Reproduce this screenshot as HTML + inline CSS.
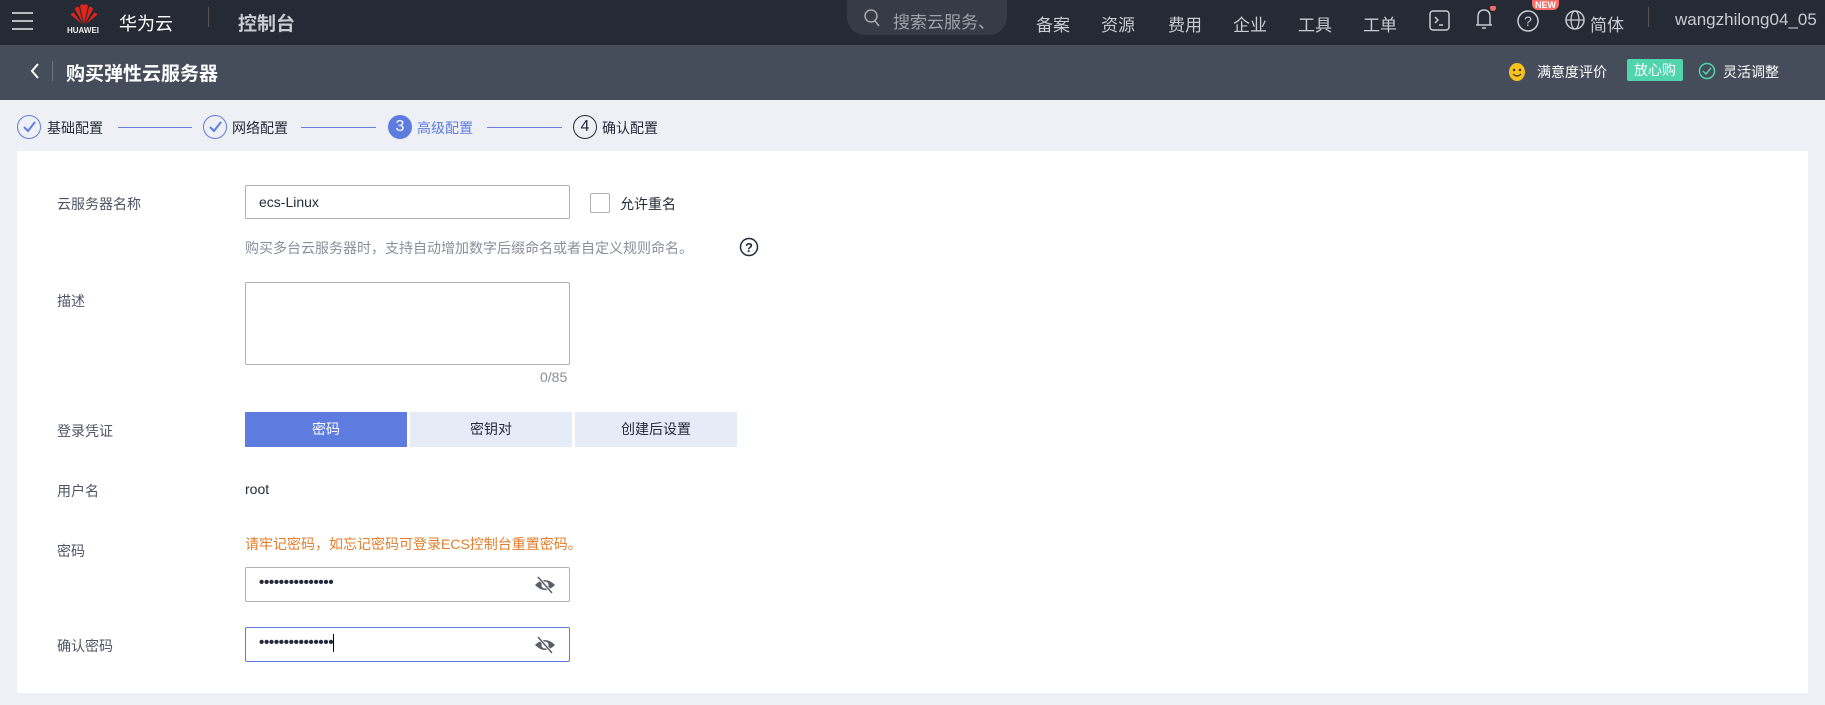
<!DOCTYPE html>
<html><head><meta charset="utf-8"><style>
*{box-sizing:border-box;margin:0;padding:0}
body{width:1825px;height:705px;overflow:hidden;background:#eff0f5;font-family:"Liberation Sans","Noto Sans CJK SC",sans-serif;font-size:14px;color:#252b3a;position:relative}
.a{position:absolute;white-space:nowrap}
.top{position:absolute;left:0;top:0;width:1825px;height:45px;background:#262a34}
.sub{position:absolute;left:0;top:45px;width:1825px;height:55px;background:#464d5a}
.nav{color:#c8cbd2;font-size:17px;top:11px}
.card{position:absolute;left:17px;top:151px;width:1791px;height:542px;background:#fff}
.lbl{color:#4e5463;font-size:14px}
.inp{position:absolute;border:1px solid #adb0b8;border-radius:2px;background:#fff;left:245px;width:325px}
.btn{position:absolute;top:412px;height:35px;line-height:35px;text-align:center;font-size:14px;background:#e6ebf8;color:#252b3a}
.circ{position:absolute;top:115px;width:24px;height:24px;border-radius:50%;border:1px solid #5e7ce0;text-align:center;line-height:22px;font-size:16px}
.line{position:absolute;top:127px;height:1px;background:#6b7fdd}
.st{top:118px;font-size:14px}
.pw{font-size:15px;font-weight:bold;letter-spacing:-0.3px;padding:6px 13px}
</style></head><body>
<div class="top"></div>
<div class="a" style="left:12px;top:12px;width:21px;height:2px;background:#bbb;box-shadow:0 8px 0 #bbb,0 16px 0 #bbb"></div>
<svg class="a" style="left:68px;top:2px" width="32" height="24" viewBox="0 0 32 24"><g fill="#e1251b"><path d="M16 22 L12 4 Q14 1 16 3Z"/><path d="M16 22 L20 4 Q18 1 16 3Z"/><path d="M15 22 L7 7 Q8 4 11 5Z"/><path d="M17 22 L25 7 Q24 4 21 5Z"/><path d="M14 22 L3 13 Q3 10 6 11Z"/><path d="M18 22 L29 13 Q29 10 26 11Z"/></g></svg>
<div class="a" style="left:67px;top:26px;color:#eee;font-size:8px;font-weight:bold">HUAWEI</div>
<div class="a" style="left:119px;top:10px;color:#fff;font-size:18px">华为云</div>
<div class="a" style="left:208px;top:7px;width:1px;height:20px;background:#555"></div>
<div class="a" style="left:238px;top:9px;color:#c8cbd2;font-size:19px;font-weight:bold">控制台</div>
<div class="a" style="left:847px;top:0;width:160px;height:35px;border-radius:0 0 18px 18px;background:#363b45"></div>
<svg class="a" style="left:863px;top:8px" width="18" height="20"><circle cx="8" cy="8" r="6" fill="none" stroke="#aaa" stroke-width="1.5"/><path d="M12 13 L16 18" stroke="#aaa" stroke-width="1.5"/></svg>
<div class="a nav" style="left:893px;top:8px;color:#9ea2aa">搜索云服务、</div>
<div class="a nav" style="left:1036px">备案</div>
<div class="a nav" style="left:1101px">资源</div>
<div class="a nav" style="left:1168px">费用</div>
<div class="a nav" style="left:1233px">企业</div>
<div class="a nav" style="left:1298px">工具</div>
<div class="a nav" style="left:1363px">工单</div>
<svg class="a" style="left:1428px;top:9px" width="24" height="24"><rect x="2" y="2" width="19" height="19" rx="3" fill="none" stroke="#c8cbd2" stroke-width="1.5"/><path d="M7 8 L10 11 L7 14 M11 16 H15" fill="none" stroke="#c8cbd2" stroke-width="1.5"/></svg>
<svg class="a" style="left:1472px;top:6px" width="24" height="26"><path d="M6 19 V11 Q6 4 12 4 Q18 4 18 11 V19 Z M4 19 H20 M10 22 H14" fill="none" stroke="#c8cbd2" stroke-width="1.5"/><circle cx="21" cy="2" r="3" fill="#f66f6a"/></svg>
<svg class="a" style="left:1516px;top:9px" width="24" height="24"><circle cx="12" cy="12" r="10" fill="none" stroke="#c8cbd2" stroke-width="1.5"/><text x="12" y="17" font-size="14" fill="#c8cbd2" text-anchor="middle" font-family="Liberation Sans">?</text></svg>
<div class="a" style="left:1532px;top:0;background:#f66f6a;color:#fff;font-size:9px;font-weight:bold;padding:0 3px;border-radius:0 0 6px 6px">NEW</div>
<svg class="a" style="left:1564px;top:9px" width="22" height="22"><circle cx="11" cy="11" r="9" fill="none" stroke="#c8cbd2" stroke-width="1.5"/><ellipse cx="11" cy="11" rx="4" ry="9" fill="none" stroke="#c8cbd2" stroke-width="1.3"/><path d="M2 11 H20" stroke="#c8cbd2" stroke-width="1.3"/></svg>
<div class="a nav" style="left:1590px">简体</div>
<div class="a" style="left:1648px;top:7px;width:1px;height:20px;background:#555"></div>
<div class="a nav" style="left:1675px;top:10px">wangzhilong04_05</div>

<div class="sub"></div>
<svg class="a" style="left:28px;top:61px" width="14" height="20"><path d="M10 3 L4 10 L10 17" fill="none" stroke="#fff" stroke-width="2"/></svg>
<div class="a" style="left:52px;top:61px;width:1px;height:20px;background:#6a707c"></div>
<div class="a" style="left:66px;top:59px;color:#fff;font-size:19px;font-weight:bold">购买弹性云服务器</div>
<svg class="a" style="left:1508px;top:62px" width="18" height="20"><ellipse cx="9" cy="10" rx="8" ry="9" fill="#f7c21c"/><circle cx="6" cy="8" r="1.2" fill="#333"/><circle cx="12" cy="8" r="1.2" fill="#333"/><path d="M5 12 Q9 16 13 12" fill="none" stroke="#333" stroke-width="1.2"/></svg>
<div class="a" style="left:1537px;top:62px;color:#fff;font-size:14px">满意度评价</div>
<div class="a" style="left:1627px;top:59px;width:56px;height:22px;background:#50d4ab;color:#fff;font-size:14px;text-align:center;line-height:22px;border-radius:2px">放心购</div>
<svg class="a" style="left:1698px;top:62px" width="18" height="18"><circle cx="9" cy="9" r="7.5" fill="none" stroke="#50d4ab" stroke-width="1.5"/><path d="M5 9 L8 12 L13 6" fill="none" stroke="#50d4ab" stroke-width="1.5"/></svg>
<div class="a" style="left:1723px;top:62px;color:#fff;font-size:14px">灵活调整</div>

<div class="circ" style="left:17px"><svg width="22" height="22"><path d="M6 11 L10 15 L17 6" fill="none" stroke="#5e7ce0" stroke-width="2"/></svg></div>
<div class="a st" style="left:47px">基础配置</div>
<div class="line" style="left:118px;width:74px"></div>
<div class="circ" style="left:203px"><svg width="22" height="22"><path d="M6 11 L10 15 L17 6" fill="none" stroke="#5e7ce0" stroke-width="2"/></svg></div>
<div class="a st" style="left:232px">网络配置</div>
<div class="line" style="left:301px;width:75px"></div>
<div class="circ" style="left:388px;background:#5e7ce0;color:#fff">3</div>
<div class="a st" style="left:417px;color:#5e7ce0">高级配置</div>
<div class="line" style="left:487px;width:75px"></div>
<div class="circ" style="left:573px;border-color:#252b3a">4</div>
<div class="a st" style="left:602px">确认配置</div>

<div class="card"></div>
<div class="a lbl" style="left:57px;top:194px">云服务器名称</div>
<div class="inp" style="top:185px;height:34px;padding:8px 13px;font-size:14px">ecs-Linux</div>
<div class="a" style="left:590px;top:193px;width:20px;height:20px;border:1px solid #adb0b8;border-radius:2px"></div>
<div class="a" style="left:620px;top:194px">允许重名</div>
<div class="a" style="left:245px;top:238px;color:#8a8e99;font-size:14px">购买多台云服务器时，支持自动增加数字后缀命名或者自定义规则命名。</div>
<svg class="a" style="left:739px;top:237px" width="20" height="20"><circle cx="10" cy="10" r="8.5" fill="none" stroke="#252b3a" stroke-width="1.5"/><text x="10" y="15" font-size="13" font-weight="bold" fill="#252b3a" text-anchor="middle" font-family="Liberation Sans">?</text></svg>
<div class="a lbl" style="left:57px;top:291px">描述</div>
<div class="inp" style="top:282px;height:83px"></div>
<div class="a" style="left:540px;top:369px;color:#8a8e99">0/85</div>
<div class="a lbl" style="left:57px;top:421px">登录凭证</div>
<div class="btn" style="left:245px;width:162px;background:#5e7ce0;color:#fff">密码</div>
<div class="btn" style="left:410px;width:162px">密钥对</div>
<div class="btn" style="left:575px;width:162px">创建后设置</div>
<div class="a lbl" style="left:57px;top:481px">用户名</div>
<div class="a" style="left:245px;top:481px">root</div>
<div class="a lbl" style="left:57px;top:541px">密码</div>
<div class="a" style="left:245px;top:534px;color:#e37d29">请牢记密码，如忘记密码可登录ECS控制台重置密码。</div>
<div class="inp pw" style="top:567px;height:35px">•••••••••••••••</div>
<div class="a lbl" style="left:57px;top:636px">确认密码</div>
<div class="inp pw" style="top:627px;height:35px;border-color:#5e7ce0">•••••••••••••••<span style="display:inline-block;width:1px;height:18px;background:#000;vertical-align:middle"></span></div>
<svg class="a" style="left:534px;top:575px" width="22" height="20"><path d="M1 10 Q11 0 21 10 Q11 20 1 10Z" fill="#5b5f69"/><circle cx="11" cy="10" r="3.5" fill="#fff"/><path d="M4 2 L18 18" stroke="#fff" stroke-width="3"/><path d="M4 2 L18 18" stroke="#5b5f69" stroke-width="1.5"/></svg>
<svg class="a" style="left:534px;top:635px" width="22" height="20"><path d="M1 10 Q11 0 21 10 Q11 20 1 10Z" fill="#5b5f69"/><circle cx="11" cy="10" r="3.5" fill="#fff"/><path d="M4 2 L18 18" stroke="#fff" stroke-width="3"/><path d="M4 2 L18 18" stroke="#5b5f69" stroke-width="1.5"/></svg>
</body></html>
